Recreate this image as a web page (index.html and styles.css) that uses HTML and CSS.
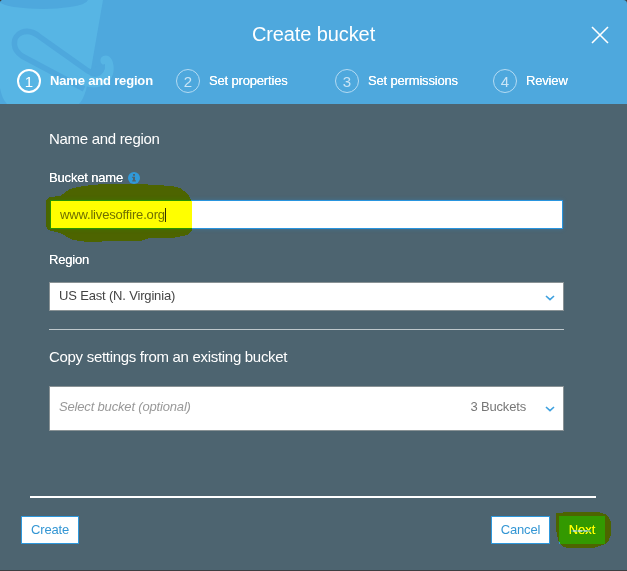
FILE: index.html
```html
<!DOCTYPE html>
<html lang="en">
<head>
<meta charset="utf-8">
<title>Create bucket</title>
<link rel="stylesheet" href="styles.css">
</head>
<body>
<main class="dialog">
  <header class="header">
    <svg class="pail" width="120" height="104" viewBox="0 0 120 104" aria-hidden="true">
      <path d="M0 0H103L91 69L86 90Q83 100 79 104H7Q2 99 0 88Z" fill="#57b5e4"/>
      <path d="M0 0H88Q86 5 70 7Q44 11 14 7Q2 5 0 2Z" fill="#4ea8dd"/>
      <path d="M82 70L91 76Q99 79 103 72Q106 67 101 63C98 56 108 52 112 60C118 75 108 90 89 87L80 84Z" fill="#57b5e4"/>
      <path d="M84 89L22 56Q15 51 14.500 45C13 33 27 26 40 37L88 71Q97 76 102 68" fill="none" stroke="#4ea8dd" stroke-width="5.500" stroke-linejoin="round"/>
      <path d="M92 68L105 64Q106 74 97 76L88 73Z" fill="#4ea8dd"/>
    </svg>
    <h1 class="title">Create bucket</h1>
    <svg class="close" width="20" height="20" viewBox="0 0 20 20" role="img" aria-label="Close"><path d="M2 2L18 18M18 2L2 18" stroke="#fff" stroke-width="1.600" fill="none"/></svg>
    <ol class="steps">
      <li class="step active"><span class="num">1</span><span class="label">Name and region</span></li>
      <li class="step"><span class="num">2</span><span class="label">Set properties</span></li>
      <li class="step"><span class="num">3</span><span class="label">Set permissions</span></li>
      <li class="step"><span class="num">4</span><span class="label">Review</span></li>
    </ol>
  </header>
  <section class="content">
    <h2 class="heading">Name and region</h2>
    <div class="caption"><span>Bucket name</span>
      <svg width="12" height="12" viewBox="0 0 12 12" aria-hidden="true"><circle cx="6" cy="6" r="6" fill="#3199d8"/><path d="M5 2h2v1.800H5zM4.200 4.800H7v3.500h.9v1.200H4.200V8.300H5V6h-.8z" fill="#4d6470"/></svg>
    </div>
    <div class="field name-field"><span class="value">www.livesoffire.org</span><i class="caret"></i></div>
    <div class="caption region-caption"><span>Region</span></div>
    <div class="field region"><span class="value">US East (N. Virginia)</span><svg class="chevron" width="10" height="6" viewBox="0 0 10 6"><path d="M1 1L5 4.700L9 1"/></svg></div>
    <hr class="rule">
    <h2 class="heading h-copy">Copy settings from an existing bucket</h2>
    <div class="field copy"><span class="placeholder">Select bucket (optional)</span><span class="count">3 Buckets</span><svg class="chevron" width="10" height="6" viewBox="0 0 10 6"><path d="M1 1L5 4.700L9 1"/></svg></div>
  </section>
  <footer class="footer">
    <button class="btn create">Create</button>
    <button class="btn cancel">Cancel</button>
    <button class="btn next">Next</button>
  </footer>
  <svg class="marker" width="627" height="571" viewBox="0 0 627 571" aria-hidden="true">
    <path d="M46 200L50 197L60 196L70 189L83 186L103 184H140L172 186L180 188L188 194L192 202V230L187 235L172 238H150L140 241H117L87 242L73 240L60 233L48 230L46 226Z"/>
    <path d="M556 513L570 512H598L605 514L609 518L611 522V535L608 542L605 544L593 548H567L562 546L558 540L556 529Z"/>
  </svg>
  <svg class="streak" width="20" height="2" viewBox="0 0 20 2" aria-hidden="true"><path d="M0 1H20" stroke="#3399cc" stroke-width="1"/><path d="M2 1H5M7 1H11M13 1H16" stroke="#fff" stroke-width="1"/></svg>
</main>
</body>
</html>
```
FILE: styles.css
```css
* { box-sizing: border-box; }
body { margin: 0; background: #3d3f42; font: 13px/16px "Liberation Sans", Arial, sans-serif; letter-spacing: -.17px; color: #fff; }
.dialog { position: relative; height: 570px; display: flex; flex-direction: column; background: #4d6470; border-radius: 4px 4px 0 0; overflow: hidden; }
.header { position: relative; height: 104px; background: #4ea8dd; padding-top: 22px; }
.pail { position: absolute; left: 0; top: 0; }
.title { position: relative; margin: 0; font-size: 20px; line-height: 24px; font-weight: 400; letter-spacing: -.1px; text-align: center; }
.close { position: absolute; right: 17px; top: 25px; }
.steps { position: relative; list-style: none; margin: 22px 0 0 17px; padding: 0; display: grid; grid-template-columns: 159px 159px 158px 1fr; }
.step { display: flex; align-items: center; height: 26px; }
.num { width: 24px; height: 24px; margin-right: 9px; border: 1.500px solid #b4dbf3; border-radius: 50%; color: #c9e5f6; font-size: 15px; line-height: 23px; letter-spacing: 0; text-align: center; }
.active .num { border: 2px solid #fff; color: #fff; line-height: 21px; }
.label { white-space: nowrap; text-shadow: 0 0 .3px #fff; }
.active .label { font-weight: 700; text-shadow: none; }
.content { padding: 26px 63px 0 49px; }
.heading { margin: 0; font-size: 15px; line-height: 18px; font-weight: 400; letter-spacing: -.3px; white-space: nowrap; }
.caption { display: flex; align-items: center; gap: 5px; margin-top: 22px; height: 16px; text-shadow: 0 0 .3px #fff; }
.caption span { white-space: nowrap; }
.field { display: flex; align-items: center; background: #fff; border: 1px solid #899295; height: 29px; padding: 0 9px; color: #444; }
.name-field { margin: 14px 1px 0; border-color: #2995df; box-shadow: 0 0 4px rgba(41, 149, 223, .35); }
.name-field .value { color: #707070; }
.caret { width: 1px; height: 14px; background: #333; }
.region-caption { margin-top: 23px; }
.region { margin-top: 14px; justify-content: space-between; padding-right: 8px; padding-bottom: 2px; }
.chevron { fill: none; stroke: #3da0df; stroke-width: 1.600; margin-top: 4px; }
.rule { border: 0; height: 1px; margin: 18px 0; background: #bfc8cc; }
.h-copy { margin-top: 17px; }
.copy { height: 45px; margin-top: 20px; padding-right: 8px; padding-bottom: 4px; }
.placeholder { font-style: italic; color: #999; }
.count { margin-left: auto; margin-right: 19px; color: #777; }
.copy .chevron { margin-top: 5px; }
.footer { margin: 65px 22px 0 21px; padding-top: 20px; display: flex; background: linear-gradient(#fff, #fff) 9px 0 / 566px 2px no-repeat; }
.btn { height: 28px; padding: 0 0 1px; border: 1px solid #2e98dc; background: #fff; color: #3396d4; font: inherit; letter-spacing: -.17px; }
.create { width: 58px; }
.cancel { width: 59px; margin-left: auto; margin-right: 9px; }
.next { width: 46px; border: 0; background: #3399cc; color: #fff; letter-spacing: 0; text-shadow: 0 0 .4px #fff; }
.marker { position: absolute; left: 0; top: 0; pointer-events: none; fill: #ff0; mix-blend-mode: multiply; shape-rendering: crispEdges; }
.streak { position: absolute; left: 571px; top: 530px; pointer-events: none; }
```
